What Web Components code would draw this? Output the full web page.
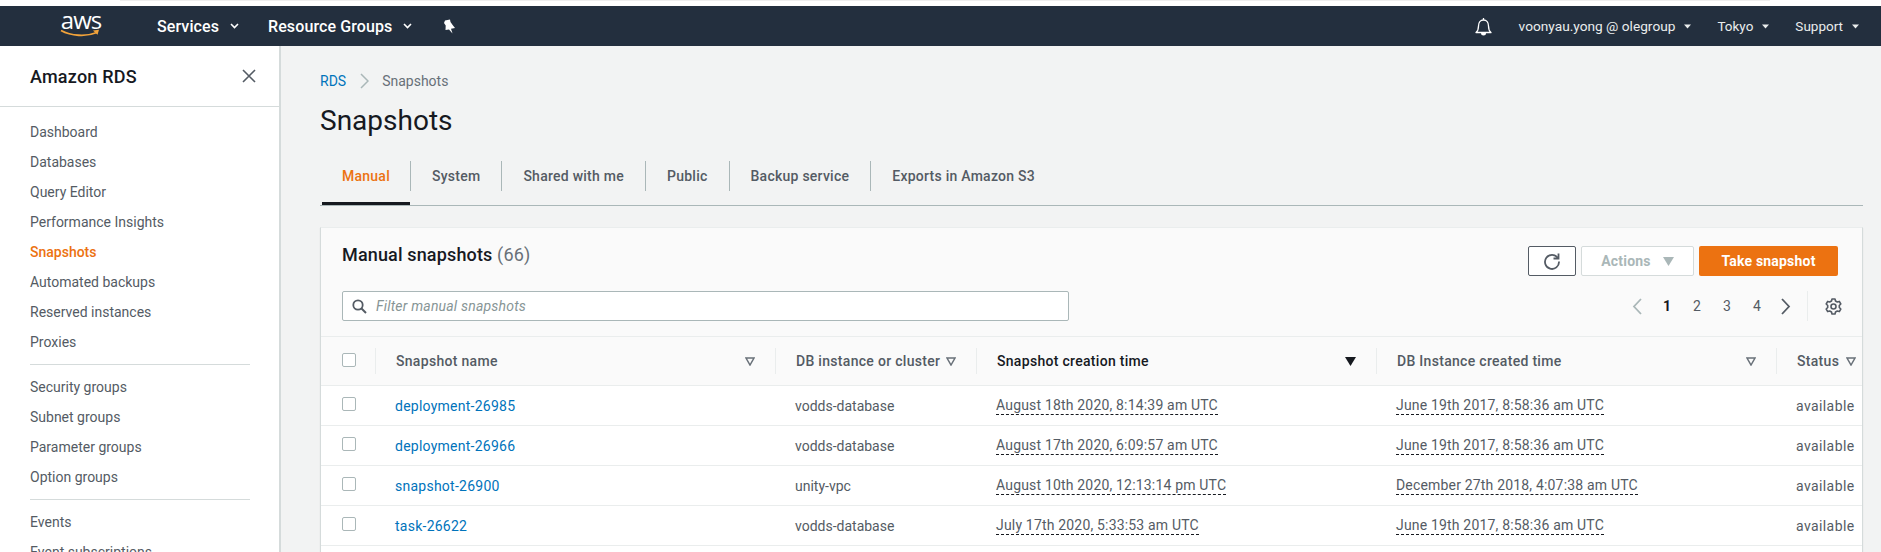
<!DOCTYPE html>
<html lang="en">
<head>
<meta charset="utf-8">
<title>Snapshots</title>
<style>
  html, body { margin: 0; height: 552px; overflow: hidden; background: #fff; }
  body { font-family: Roboto, "Liberation Sans", sans-serif; font-size: 14px; color: #16191f; }
  .page { display: flex; height: 506px; overflow: hidden; }
</style>
</head>
<body>
<aws-topbar></aws-topbar>
<div class="page">
  <rds-sidenav></rds-sidenav>
  <rds-main>
    <rds-tabs></rds-tabs>
    <rds-snapshot-card></rds-snapshot-card>
  </rds-main>
</div>

<script>
const caret = `<svg width="9" height="6" viewBox="0 0 9 6"><path d="M1 1l3.5 3.5L8 1" fill="none" stroke="currentColor" stroke-width="1.6"/></svg>`;
const smallCaret = `<svg width="7" height="5" viewBox="0 0 7 5"><path d="M0 .5h7L3.5 4.5z" fill="currentColor"/></svg>`;
const filterIcon = `<svg width="10" height="9" viewBox="0 0 10 9"><path d="M1 1h8L5 8z" fill="none" stroke="#687078" stroke-width="1.5"/></svg>`;
const sortIcon = `<svg width="11" height="9" viewBox="0 0 11 9"><path d="M0 0h11L5.5 9z" fill="#16191f"/></svg>`;

class AwsTopbar extends HTMLElement {
  constructor() {
    super();
    this.attachShadow({ mode: 'open' });
    this.shadowRoot.innerHTML = `
      <style>
        :host { display: block; background: #fff; }
        .strip { height: 1px; margin: 0 111px 5px 120px; background: #eee; }
        .bar { display: flex; align-items: center; height: 40px; background: #232f3e; color: #fff; padding-left: 60px; padding-right: 22px; }
        .logo { display: flex; flex-direction: column; align-items: center; width: 42px; margin-top: -5px; }
        .logo span { font: 400 24px/20px "Open Sans", sans-serif; letter-spacing: -1px; }
        .logo svg { margin-top: -1px; }
        .menu { display: flex; align-items: center; font-weight: 500; font-size: 16px; letter-spacing: .1px; }
        .menu svg { margin-left: 11px; }
        .services { margin-left: 55px; }
        .groups { margin-left: 29px; }
        .pin { margin-left: 30px; display: flex; }
        .spacer { flex: 1; }
        .bell { display: flex; margin-right: 27px; }
        .item { display: flex; align-items: center; font-size: 13.5px; color: #eaeded; }
        .item svg { margin-left: 9px; }
        .user { font-size: 13.7px; }
        .tokyo { margin-left: 26px; }
        .support { margin-left: 26px; }
      </style>
      <div class="strip"></div>
      <div class="bar">
        <div class="logo">
          <span>aws</span>
          <svg width="42" height="8" viewBox="0 0 42 8"><path d="M1 1.5C11 7 26 8 37 3.5" fill="none" stroke="#f2a33a" stroke-width="1.8"/><path d="M33 1.5l6-.7-1.5 5z" fill="#f2a33a"/></svg>
        </div>
        <div class="menu services">Services${caret}</div>
        <div class="menu groups">Resource Groups${caret}</div>
        <div class="pin"><svg width="14" height="15" viewBox="0 0 14 15"><path d="M3 1.5l5-1 .5 2.5L11 6.500 13 9l-4 .8L10.500 14.500 7 10.500 3.500 11l.2-4.500L2 4z" fill="#fff"/></svg></div>
        <div class="spacer"></div>
        <div class="bell"><svg width="17" height="19" viewBox="0 0 17 19"><path d="M1 15.500c2-1.500 2.500-3 2.500-6.500 0-3.500 2-6 5-6s5 2.500 5 6c0 3.500.5 5 2.500 6.500z" fill="none" stroke="#fff" stroke-width="1.300" stroke-linejoin="round"/><path d="M8.500 1v2" stroke="#fff" stroke-width="1.300"/><path d="M6 16h5a2.500 2.500 0 0 1-5 0z" fill="#fff"/></svg></div>
        <div class="item user">voonyau.yong @ olegroup${smallCaret}</div>
        <div class="item tokyo">Tokyo${smallCaret}</div>
        <div class="item support">Support${smallCaret}</div>
      </div>`;
  }
}

class RdsSidenav extends HTMLElement {
  constructor() {
    super();
    this.attachShadow({ mode: 'open' });
    const groups = [
      ['Dashboard', 'Databases', 'Query Editor', 'Performance Insights', 'Snapshots', 'Automated backups', 'Reserved instances', 'Proxies'],
      ['Security groups', 'Subnet groups', 'Parameter groups', 'Option groups'],
      ['Events', 'Event subscriptions']
    ];
    const lists = groups.map(g => `<ul>${g.map(t => `<li class="${t === 'Snapshots' ? 'on' : ''}">${t}</li>`).join('')}</ul>`).join('<hr>');
    this.shadowRoot.innerHTML = `
      <style>
        :host { display: block; flex: none; width: 279px; background: #fff; border-right: 2px solid #d5dbdb; overflow: hidden; }
        header { display: flex; align-items: center; justify-content: space-between; height: 60px; padding: 0 23px 0 30px; border-bottom: 1px solid #d5dbdb; box-sizing: content-box; }
        h2 { margin: 0; font-size: 18px; font-weight: 500; color: #16191f; letter-spacing: .2px; }
        nav { padding: 10px 29px 0 30px; }
        ul { list-style: none; margin: 0; padding: 0; }
        li { height: 30px; line-height: 30px; font-size: 14px; color: #545b64; white-space: nowrap; }
        li.on { color: #ec7211; font-weight: 500; }
        hr { border: 0; border-top: 1px solid #d5dbdb; margin: 7px 0 7px; }
        svg { display: block; }
      </style>
      <header>
        <h2>Amazon RDS</h2>
        <svg width="14" height="14" viewBox="0 0 14 14"><path d="M1 1l12 12M13 1L1 13" stroke="#545b64" stroke-width="1.600"/></svg>
      </header>
      <nav>${lists}</nav>`;
  }
}

class RdsMain extends HTMLElement {
  constructor() {
    super();
    this.attachShadow({ mode: 'open' });
    this.shadowRoot.innerHTML = `
      <style>
        :host { display: block; flex: 1; min-width: 0; background: #f2f3f3; padding: 0 18px 0 39px; }
        .crumbs { display: flex; align-items: center; height: 18px; margin-top: 26px; font-size: 14px; color: #687078; }
        .crumbs a { color: #0073bb; }
        .crumbs svg { margin: 0 13px 0 14px; }
        h1 { margin: 10px 0 0; font-size: 28px; line-height: 42px; font-weight: 400; color: #16191f; }
      </style>
      <div class="crumbs"><a>RDS</a><svg width="9" height="16" viewBox="0 0 9 16"><path d="M1 1l7 7-7 7" fill="none" stroke="#aab7b8" stroke-width="1.500"/></svg><span>Snapshots</span></div>
      <h1>Snapshots</h1>
      <slot></slot>`;
  }
}

class RdsTabs extends HTMLElement {
  constructor() {
    super();
    this.attachShadow({ mode: 'open' });
    const tabs = ['Manual', 'System', 'Shared with me', 'Public', 'Backup service', 'Exports in Amazon S3'];
    this.shadowRoot.innerHTML = `
      <style>
        :host { display: flex; height: 44px; margin-top: 19px; border-bottom: 1px solid #aab7b8; padding-left: 2px; box-sizing: content-box; }
        .tab { height: 44px; box-sizing: border-box; }
        .tab span { display: flex; align-items: center; height: 30px; padding: 0 21px; border-left: 1px solid #aab7b8; font-weight: 500; font-size: 14px; letter-spacing: .25px; color: #545b64; white-space: nowrap; }
        .tab.on { border-bottom: 3px solid #16191f; }
        .tab.on span { border-left: 0; padding: 0 20px; color: #ec7211; }
      </style>
      ${tabs.map((t, i) => `<div class="tab ${i === 0 ? 'on' : ''}"><span>${t}</span></div>`).join('')}`;
  }
}

class RdsSnapshotRow extends HTMLElement {
  constructor() {
    super();
    this.attachShadow({ mode: 'open' });
  }
  connectedCallback() {
    const get = n => this.getAttribute(n);
    this.shadowRoot.innerHTML = `
      <style>
        :host { display: grid; grid-template-columns: 54px 400px 201px 400px 400px 85px; align-items: center; height: 39px; background: #fff; border-bottom: 1px solid #eaeded; font-size: 14px; color: #545b64; }
        .c { padding-left: 20px; white-space: nowrap; }
        .box { width: 14px; height: 14px; margin-left: 21px; margin-top: -3px; background: #fff; border: 1px solid #aab7b8; border-radius: 2px; box-sizing: border-box; }
        a { color: #0073bb; letter-spacing: .25px; }
        .d { padding-bottom: 1px; border-bottom: 1px dashed #16191f; position: relative; top: -1px; letter-spacing: .18px; }
        .s { letter-spacing: .4px; }
      </style>
      <div class="box"></div>
      <div class="c"><a>${get('name')}</a></div>
      <div class="c">${get('db')}</div>
      <div class="c"><span class="d">${get('created')}</span></div>
      <div class="c"><span class="d">${get('instance')}</span></div>
      <div class="c s">available</div>`;
  }
}

class RdsSnapshotCard extends HTMLElement {
  constructor() {
    super();
    this.attachShadow({ mode: 'open' });
    const heads = [
      ['Snapshot name', filterIcon, ''],
      ['DB instance or cluster', filterIcon, ''],
      ['Snapshot creation time', sortIcon, 'sorted'],
      ['DB Instance created time', filterIcon, ''],
      ['Status', filterIcon, '']
    ];
    this.shadowRoot.innerHTML = `
      <style>
        :host { display: block; margin-top: 21px; background: #fafafa; border: 1px solid #eaeded; border-left-color: #d5dbdb; border-right: 1px solid #d5dbdb; border-bottom: 0; box-shadow: 0 1px 1px rgba(0,28,36,.1); }
        .top { display: flex; justify-content: space-between; padding: 18px 24px 0 21px; height: 90px; border-bottom: 1px solid #eaeded; box-sizing: content-box; }
        .left { display: flex; flex-direction: column; }
        h2 { margin: -2px 0 0; height: 22px; font-size: 18px; line-height: 22px; font-weight: 500; letter-spacing: .15px; color: #16191f; }
        h2 span { font-weight: 400; color: #687078; }
        .search { display: flex; align-items: center; width: 727px; height: 30px; margin-top: 25px; padding-left: 9px; background: #fff; border: 1px solid #aab7b8; border-radius: 2px; box-sizing: border-box; font-style: italic; letter-spacing: .2px; color: #879596; }
        .search svg { margin-right: 9px; }
        .right { display: flex; flex-direction: column; align-items: flex-end; }
        .btns { display: flex; gap: 5px; }
        button { height: 30px; font: 700 14px Roboto, sans-serif; letter-spacing: .2px; border-radius: 2px; box-sizing: border-box; display: flex; align-items: center; justify-content: center; padding: 0; }
        .refresh { width: 48px; background: #fff; border: 1px solid #545b64; }
        .actions { width: 113px; gap: 12px; background: #fff; border: 1px solid #d5dbdb; color: #aab7b8; }
        .take { width: 139px; background: #ec7211; border: 0; color: #fff; }
        .pager { display: flex; align-items: center; height: 30px; margin: 15px -4px 0 0; color: #545b64; font-size: 14px; }
        .pager span { width: 30px; text-align: center; }
        .pager .cur { color: #16191f; font-weight: 700; }
        .pager .prev { margin-right: 10px; }
        .pager .next { margin-left: 9px; }
        .pager .gear { display: flex; align-items: center; height: 30px; margin-left: 16px; padding-left: 17px; border-left: 1px solid #eaeded; }
        .heads { display: grid; grid-template-columns: 54px 400px 201px 400px 400px 85px; height: 48px; align-items: center; border-bottom: 1px solid #eaeded; box-sizing: content-box; }
        .h { display: flex; align-items: center; justify-content: space-between; height: 26px; padding: 0 20px 0 20px; border-left: 1px solid #eaeded; font-weight: 500; letter-spacing: .3px; color: #545b64; white-space: nowrap; box-sizing: border-box; }
        .h.sorted { color: #16191f; }
        .h:last-child { padding-right: 5px; }
        .h svg { flex: none; }
        .box { width: 14px; height: 14px; margin-left: 21px; margin-top: -3px; background: #fff; border: 1px solid #aab7b8; border-radius: 2px; box-sizing: border-box; }
      </style>
      <div class="top">
        <div class="left">
          <h2>Manual snapshots <span>(66)</span></h2>
          <div class="search">
            <svg width="15" height="15" viewBox="0 0 15 15"><circle cx="6" cy="6" r="4.700" fill="none" stroke="#545b64" stroke-width="1.800"/><path d="M9.500 9.500l4.500 4.500" stroke="#545b64" stroke-width="2"/></svg>
            Filter manual snapshots
          </div>
        </div>
        <div class="right">
          <div class="btns">
            <button class="refresh"><svg width="18" height="18" viewBox="0 0 18 18"><path d="M14.800 6A7 7 0 1 0 16 9.500" fill="none" stroke="#545b64" stroke-width="1.800"/><path d="M15.500 1.500v5h-5" fill="none" stroke="#545b64" stroke-width="1.800"/></svg></button>
            <button class="actions">Actions<svg width="11" height="9" viewBox="0 0 11 9"><path d="M0 0h11L5.500 9z" fill="#aab7b8"/></svg></button>
            <button class="take">Take snapshot</button>
          </div>
          <div class="pager">
            <svg class="prev" width="10" height="17" viewBox="0 0 10 17"><path d="M9 1L2 8.500 9 16" fill="none" stroke="#aab7b8" stroke-width="1.800"/></svg>
            <span class="cur">1</span><span>2</span><span>3</span><span>4</span>
            <svg class="next" width="10" height="17" viewBox="0 0 10 17"><path d="M1 1l7 7.500L1 16" fill="none" stroke="#545b64" stroke-width="1.800"/></svg>
            <div class="gear"><svg width="17" height="17" viewBox="0 0 17 17"><path d="M7 1h3l.5 2 1.800 1 2-.6 1.500 2.600-1.500 1.500v2l1.500 1.500-1.500 2.600-2-.6-1.800 1-.5 2H7l-.5-2-1.800-1-2 .6L1.200 11l1.500-1.500v-2L1.200 6l1.500-2.600 2 .6 1.800-1z" fill="none" stroke="#545b64" stroke-width="1.600" stroke-linejoin="round"/><circle cx="8.500" cy="8.500" r="2.500" fill="none" stroke="#545b64" stroke-width="1.600"/></svg></div>
          </div>
        </div>
      </div>
      <div class="heads">
        <div class="box"></div>
        ${heads.map(h => `<div class="h ${h[2]}"><span>${h[0]}</span>${h[1]}</div>`).join('')}
      </div>
      <rds-snapshot-row name="deployment-26985" db="vodds-database" created="August 18th 2020, 8:14:39 am UTC" instance="June 19th 2017, 8:58:36 am UTC"></rds-snapshot-row>
      <rds-snapshot-row name="deployment-26966" db="vodds-database" created="August 17th 2020, 6:09:57 am UTC" instance="June 19th 2017, 8:58:36 am UTC"></rds-snapshot-row>
      <rds-snapshot-row name="snapshot-26900" db="unity-vpc" created="August 10th 2020, 12:13:14 pm UTC" instance="December 27th 2018, 4:07:38 am UTC"></rds-snapshot-row>
      <rds-snapshot-row name="task-26622" db="vodds-database" created="July 17th 2020, 5:33:53 am UTC" instance="June 19th 2017, 8:58:36 am UTC"></rds-snapshot-row>
      <div style="height:8px;background:#fff"></div>`;
  }
}

customElements.define('aws-topbar', AwsTopbar);
customElements.define('rds-sidenav', RdsSidenav);
customElements.define('rds-main', RdsMain);
customElements.define('rds-tabs', RdsTabs);
customElements.define('rds-snapshot-row', RdsSnapshotRow);
customElements.define('rds-snapshot-card', RdsSnapshotCard);
</script>
</body>
</html>
